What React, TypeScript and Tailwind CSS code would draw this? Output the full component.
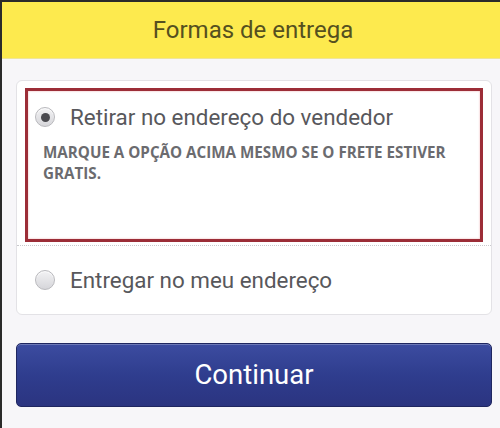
import React from "react";

function Radio({ checked }: { checked?: boolean }) {
  return (
    <span className="relative flex h-[20px] w-[20px] shrink-0 items-center justify-center rounded-full border border-[#b9b9bd] bg-gradient-to-b from-[#f2f2f4] to-[#d6d6da] shadow-[inset_0_1px_1px_rgba(255,255,255,0.8)]">
      {checked && <span className="h-[9px] w-[9px] rounded-full bg-[#4a4a4f]" />}
    </span>
  );
}

export default function App() {
  return (
    <div className="h-[428px] w-[500px] overflow-hidden border-l-2 border-t-2 border-[#2a2a2a] bg-[#f7f6f9] font-['Roboto',sans-serif]">
      <div className="flex h-[57px] items-center justify-center border-b border-[#efe59a] bg-[#fdea4e]">
        <h1 className="pl-[4px] text-[24px] text-[#55501f]">Formas de entrega</h1>
      </div>
      <div className="pl-[14px] pr-[8px] pt-[21px]">
        <div className="rounded-[6px] border border-[#e3e2e6] bg-white">
          <div className="px-[8px] pt-[7px]">
            <div className="h-[154px] border-[3px] border-[#9c2d37] px-[7px] pt-[14px] shadow-[inset_0_0_2px_rgba(220,80,90,0.5)]">
              <div className="flex items-center gap-[15px]">
                <Radio checked />
                <span className="text-[22.4px] leading-[24px] text-[#58585c]">Retirar no endereço do vendedor</span>
              </div>
              <p className="mt-[13px] pl-[8px] font-['Open_Sans',sans-serif] text-[15.2px] font-bold leading-[21px] text-[#6b6b6f]">
                MARQUE A OPÇÃO ACIMA MESMO SE O FRETE ESTIVER
                <br />
                GRATIS.
              </p>
            </div>
          </div>
          <div className="mt-[3px] border-t border-dotted border-[#c9c9cd]" />
          <div className="flex h-[68px] items-center gap-[15px] px-[18px]">
            <Radio />
            <span className="text-[22.4px] leading-[24px] text-[#58585c]">Entregar no meu endereço</span>
          </div>
        </div>
        <button className="mt-[28px] flex h-[64px] w-full items-center justify-center rounded-[5px] border border-[#1f2660] bg-gradient-to-b from-[#3c4ca0] via-[#2f3d8e] to-[#2b3480] text-[27.5px] text-white shadow-[inset_0_1px_0_rgba(255,255,255,0.25)]">
          Continuar
        </button>
      </div>
    </div>
  );
}
